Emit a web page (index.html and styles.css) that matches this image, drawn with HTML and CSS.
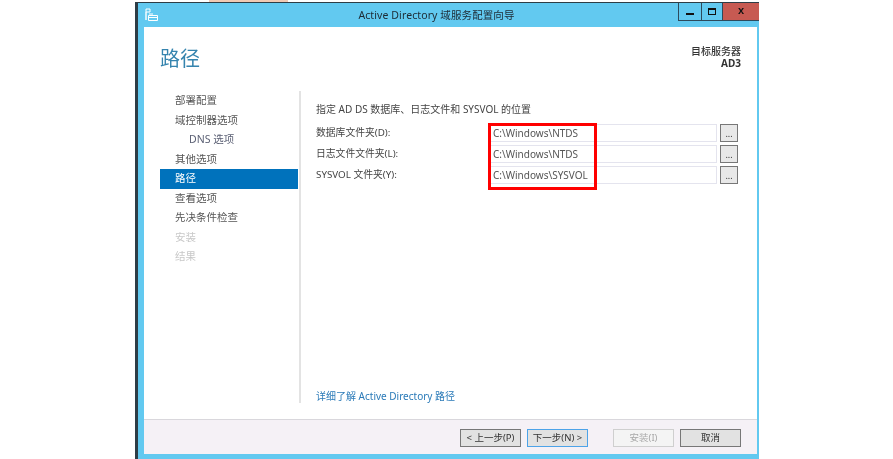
FILE: index.html
```html
<!DOCTYPE html>
<html lang="zh">
<head>
<meta charset="utf-8">
<title>Active Directory 域服务配置向导</title>
<link rel="stylesheet" href="styles.css">
</head>
<body>
<div class="strip"></div>
<div class="window">
  <header class="titlebar">
    <svg class="app-icon" width="14" height="14" viewBox="0 0 14 14">
      <path d="M1 1h4v3H1z" fill="none" stroke="#fff" stroke-width="1"/>
      <path d="M1 4v8" stroke="#fff" stroke-width="1.4"/>
      <path d="M3.500 7.500h9v5h-9z" fill="none" stroke="#fff" stroke-width="1"/>
      <path d="M4 6h4" stroke="#fff" stroke-width="1"/>
      <path d="M4 9.500h8" stroke="#fff" stroke-width="1"/>
    </svg>
    <div class="title">Active Directory 域服务配置向导</div>
    <div class="controls">
      <div class="ctl ctl-min"><span class="glyph-min"></span></div>
      <div class="ctl ctl-max"><span class="glyph-max"></span></div>
      <div class="ctl ctl-close">x</div>
    </div>
  </header>
  <div class="client">
    <div class="head">
      <h1 class="page-title">路径</h1>
      <div class="server"><div>目标服务器</div><div class="server-name">AD3</div></div>
    </div>
    <div class="main">
      <nav class="nav">
        <div class="nav-item">部署配置</div>
        <div class="nav-item">域控制器选项</div>
        <div class="nav-item nav-sub">DNS 选项</div>
        <div class="nav-item">其他选项</div>
        <div class="nav-item nav-active">路径</div>
        <div class="nav-item">查看选项</div>
        <div class="nav-item">先决条件检查</div>
        <div class="nav-item nav-off">安装</div>
        <div class="nav-item nav-off">结果</div>
      </nav>
      <section class="content">
        <p class="desc">指定 AD DS 数据库、日志文件和 SYSVOL 的位置</p>
        <div class="rows">
          <div class="row"><label class="row-label">数据库文件夹(D):</label><div class="field">C:\Windows\NTDS</div><div class="browse">...</div></div>
          <div class="row"><label class="row-label">日志文件文件夹(L):</label><div class="field">C:\Windows\NTDS</div><div class="browse">...</div></div>
          <div class="row"><label class="row-label">SYSVOL 文件夹(Y):</label><div class="field">C:\Windows\SYSVOL</div><div class="browse">...</div></div>
          <div class="highlight"></div>
        </div>
        <a class="more" href="#">详细了解 Active Directory 路径</a>
      </section>
    </div>
    <footer class="footer">
      <div class="btn">&lt; 上一步(P)</div>
      <div class="btn btn-focus">下一步(N) &gt;</div>
      <div class="btn btn-off">安装(I)</div>
      <div class="btn">取消</div>
    </footer>
  </div>
</div>
</body>
</html>
```
FILE: styles.css
```css
* { box-sizing: border-box; }
html, body { margin: 0; padding: 0; background: #fff; }
body {
  width: 893px;
  height: 459px;
  overflow: hidden;
  font-family: "Noto Sans", "Noto Sans CJK SC", sans-serif;
  font-size: 10px;
  color: #444;
}
.strip {
  height: 2px;
  width: 79px;
  margin-left: 209px;
  background: #f0c9b4;
}
.window {
  width: 624px;
  height: 457px;
  margin-left: 135px;
  display: flex;
  flex-direction: column;
  background: #62c9f0;
  border-left: 3px solid #2d3d46;
  border-top: 1px solid #2d3d46;
  padding: 0 2px 5px 6px;
  filter: blur(0.35px);
}
.titlebar {
  height: 24px;
  flex: none;
  display: flex;
  align-items: flex-start;
  margin-left: -6px;
  margin-right: -2px;
  padding-left: 7px;
}
.app-icon { margin-top: 5px; flex: none; }
.title {
  flex: 1;
  text-align: center;
  font-size: 10.500px;
  line-height: 24px;
  color: #1d2a33;
  padding-left: 36px;
  letter-spacing: 0.100px;
}
.controls { display: flex; flex: none; height: 18px; border-bottom: 1px solid #2d4a5c; }
.ctl {
  display: flex;
  align-items: center;
  justify-content: center;
  border-left: 1px solid #2d4a5c;
}
.ctl-min { width: 23px; }
.ctl-max { width: 21px; }
.ctl-close {
  width: 37px;
  background: #c75a52;
  color: #111;
  font-weight: 700;
  font-size: 11px;
  line-height: 1;
  padding-bottom: 3px;
  font-family: "Liberation Sans", sans-serif;
}
.glyph-min { display: block; width: 8px; height: 2px; background: #111; margin-top: 5px; }
.glyph-max { display: block; width: 8px; height: 7px; border: 1px solid #111; border-top-width: 2px; }
.client {
  flex: 1;
  display: flex;
  flex-direction: column;
  background: #fff;
  min-height: 0;
}
.head {
  height: 64px;
  flex: none;
  display: flex;
  justify-content: space-between;
  padding: 17px 16px 0 16px;
}
.page-title {
  margin: 0;
  font-size: 20px;
  font-weight: 400;
  line-height: 29px;
  color: #3584ae;
}
.server {
  text-align: right;
  font-size: 10px;
  line-height: 12.500px;
  padding-top: 0.500px;
  color: #333;
  font-weight: 500;
}
.server-name { font-weight: 700; }
.main {
  flex: 1;
  display: flex;
  min-height: 0;
  padding-bottom: 16px;
}
.nav {
  width: 139px;
  margin-left: 16px;
  padding-top: 0.400px;
  flex: none;
}
.nav-item {
  height: 19.500px;
  line-height: 19.500px;
  padding-left: 15px;
  font-size: 10.500px;
  color: #555;
}
.nav-sub { padding-left: 29px; color: #5a5f73; }
.nav-active { background: #0072bc; color: #fff; width: 138px; }
.nav-off { color: #c8c8c8; }
.content {
  flex: 1;
  display: flex;
  flex-direction: column;
  border-left: 2px solid #e3e3e3;
  padding-left: 15px;
}
.desc {
  margin: 12px 0 0;
  font-size: 10px;
  line-height: 13px;
  color: #444;
}
.rows {
  position: relative;
  margin-top: 8px;
  display: flex;
  flex-direction: column;
  gap: 3px;
}
.row { display: flex; height: 18px; align-items: stretch; }
.row-label {
  width: 174px;
  font-size: 9.800px;
  line-height: 18px;
  color: #444;
}
.field {
  width: 227px;
  border: 1px solid #e4e4ee;
  font-size: 10px;
  line-height: 16px;
  padding-left: 2px;
  color: #555;
}
.browse {
  width: 18px;
  margin-left: 3px;
  border: 1px solid #777;
  background: #e8e8e8;
  text-align: center;
  font-size: 9px;
  line-height: 18px;
  color: #333;
}
.highlight {
  position: absolute;
  left: 172px;
  top: -1px;
  width: 109px;
  height: 67px;
  border: 3px solid #f00;
}
.more {
  margin-top: auto;
  font-size: 10px;
  line-height: 13px;
  color: #2a7ab8;
  text-decoration: none;
}
.footer {
  height: 35px;
  flex: none;
  display: flex;
  align-items: flex-start;
  padding: 9px 0 0 316px;
  background: #f5f1f6;
  border-top: 1px solid #d9d7dc;
  gap: 6px;
}
.btn {
  width: 61px;
  height: 18px;
  border: 1px solid #777;
  background: #e2e2e2;
  text-align: center;
  font-size: 9.500px;
  line-height: 16px;
  color: #333;
}
.btn-focus { border-color: #4da3e8; }
.btn-off { margin-left: 19px; background: #f4f4f4; border-color: #cfcfcf; color: #a8a8a8; }
```
